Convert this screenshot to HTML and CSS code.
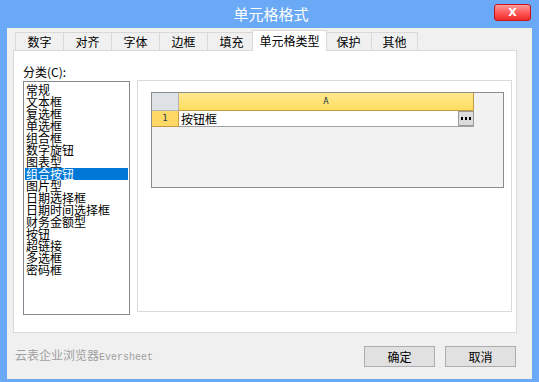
FILE: index.html
```html
<html>
<head>
  <meta charset="utf-8">
  <link rel="stylesheet" href="styles.css">
</head>
<body>
<div class="window">
  <div class="titlebar">
    <span></span>
    <div class="title">单元格格式</div>
    <div class="close">X</div>
  </div>
  <div class="client">
    <div class="tabs">
      <div class="tab w48">数字</div>
      <div class="tab w48">对齐</div>
      <div class="tab w48">字体</div>
      <div class="tab w48">边框</div>
      <div class="tab w48">填充</div>
      <div class="tab active">单元格类型</div>
      <div class="tab w46">保护</div>
      <div class="tab w46">其他</div>
    </div>
    <div class="panel">
      <div class="category">
        <div class="label">分类(C):</div>
        <div class="list">
          <div class="item">常规</div>
          <div class="item">文本框</div>
          <div class="item">复选框</div>
          <div class="item">单选框</div>
          <div class="item">组合框</div>
          <div class="item">数字旋钮</div>
          <div class="item">图表型</div>
          <div class="item selected">组合按钮</div>
          <div class="item">图片型</div>
          <div class="item">日期选择框</div>
          <div class="item">日期时间选择框</div>
          <div class="item">财务金额型</div>
          <div class="item">按钮</div>
          <div class="item">超链接</div>
          <div class="item">多选框</div>
          <div class="item">密码框</div>
        </div>
      </div>
      <div class="preview">
        <div class="sheet">
          <div class="corner"></div>
          <div class="colhead">A</div>
          <div class="rowhead">1</div>
          <div class="cell">
            <span class="value">按钮框</span>
            <span class="more">
              <svg width="10" height="3" viewBox="0 0 10 3"><rect x="0" y="0" width="2" height="3" fill="#000"/><rect x="4" y="0" width="2" height="3" fill="#000"/><rect x="8" y="0" width="2" height="3" fill="#000"/></svg>
            </span>
          </div>
        </div>
      </div>
    </div>
    <div class="footer">
      <div class="brand">云表企业浏览器<span class="mono">Eversheet</span></div>
      <div class="buttons">
        <div class="btn">确定</div>
        <div class="btn">取消</div>
      </div>
    </div>
  </div>
</div>
</body>
</html>
```

FILE: styles.css
```css
body{
  margin: 0;
  background-color: #6aa9f5;
  font-family: "Noto Sans CJK SC", "Liberation Sans", sans-serif;
  font-size: 12px;
  color: #000;
}
.window{
  width: 539px;
  height: 382px;
  box-sizing: border-box;
  padding: 0 7px 3px 7px;
  background-color: #6aa9f5;
  display: flex;
  flex-direction: column;
}
.titlebar{
  height: 28px;
  display: grid;
  grid-template-columns: 1fr auto 1fr;
  align-items: start;
}
.title{
  color: #fff;
  font-size: 15px;
  line-height: 28px;
  padding-left: 3px;
}
.close{
  justify-self: end;
  margin-top: 4px;
  margin-right: 1px;
  width: 37px;
  height: 17px;
  box-sizing: border-box;
  border: 1px solid #c8141a;
  border-radius: 3px;
  background: linear-gradient(to bottom, #ff9a9a 0%, #ff5a5a 50%, #f02a2a 100%);
  color: #fff;
  font-family: "DejaVu Sans", sans-serif;
  font-weight: bold;
  font-size: 11px;
  line-height: 15px;
  text-align: center;
}
.client{
  flex: 1;
  background-color: #f0f0f0;
  display: flex;
  flex-direction: column;
}

/* tabs */
.tabs{
  margin-top: 2px;
  padding-left: 8px;
  height: 20px;
  display: flex;
  align-items: flex-end;
}
.tab{
  height: 18px;
  box-sizing: border-box;
  border: 1px solid #d9d9d9;
  border-bottom: none;
  margin-right: -1px;
  background-color: #f0f0f0;
  text-align: center;
  line-height: 17px;
}
.w48{ width: 49px; }
.w46{ width: 47px; }
.tab.active{
  position: relative;
  z-index: 1;
  width: 75px;
  height: 21px;
  margin: 0 -2px -1px -3px;
  background-color: #fff;
  line-height: 19px;
}

/* panel */
.panel{
  margin-left: 6px;
  width: 504px;
  height: 283px;
  box-sizing: border-box;
  border: 1px solid #d9d9d9;
  background-color: #fff;
  display: flex;
  align-items: flex-start;
}
.category{
  padding: 14px 0 0 9px;
}
.label{
  line-height: 14px;
  margin-bottom: 2px;
}
.list{
  width: 107px;
  height: 234px;
  box-sizing: border-box;
  border: 1px solid #828790;
  padding: 2px 1px;
}
.item{
  line-height: 12px;
  height: 12px;
  padding-left: 1px;
  white-space: nowrap;
}
.item.selected{
  background-color: #0078d7;
  color: #fff;
}
.preview{
  margin: 29px 0 0 7px;
  width: 375px;
  height: 232px;
  box-sizing: border-box;
  border: 1px solid #dadada;
}

/* sheet preview */
.sheet{
  margin: 11px 0 0 13px;
  width: 353px;
  height: 96px;
  box-sizing: border-box;
  border: 1px solid #8c8c8c;
  background-color: #f2f2f2;
  display: grid;
  grid-template-columns: 27px 295px;
  grid-template-rows: 18px 16px;
  font-family: "DejaVu Sans Mono", monospace;
  font-size: 9px;
  color: #1f3c4c;
}
.corner{
  background-color: #dee1e6;
  border-right: 1px solid #b4b4b4;
  border-bottom: 1px solid #b4b4b4;
}
.colhead{
  box-sizing: border-box;
  background: linear-gradient(to bottom, #ffe98f 0%, #ffdd5f 100%);
  border-right: 1px solid #c99a3e;
  border-bottom: 1px solid #c99a3e;
  text-align: center;
  line-height: 17px;
}
.rowhead{
  box-sizing: border-box;
  background-color: #ffd966;
  border-right: 1px solid #c99a3e;
  border-bottom: 1px solid #c99a3e;
  text-align: center;
  line-height: 15px;
}
.cell{
  box-sizing: border-box;
  background-color: #fff;
  border-bottom: 1px solid #a0a0a0;
  display: flex;
  justify-content: space-between;
  align-items: stretch;
}
.value{
  font-family: "Noto Sans CJK SC", sans-serif;
  font-size: 12px;
  line-height: 15px;
  color: #000;
  padding-left: 2px;
}
.more{
  width: 16px;
  box-sizing: border-box;
  border: 1px solid #9a9a9a;
  background-color: #dcdcdc;
  display: flex;
  align-items: center;
  justify-content: center;
}

/* footer */
.footer{
  flex: 1;
  display: flex;
  align-items: center;
  justify-content: space-between;
  padding: 0 16px 0 8px;
}
.brand{
  color: #a0a0a0;
  line-height: 14px;
}
.mono{
  font-family: "Liberation Mono", monospace;
  font-size: 10px;
}
.buttons{
  display: flex;
  gap: 10px;
}
.btn{
  width: 71px;
  height: 21px;
  box-sizing: border-box;
  border: 1px solid #adadad;
  background-color: #e1e1e1;
  text-align: center;
  line-height: 19px;
}
```
